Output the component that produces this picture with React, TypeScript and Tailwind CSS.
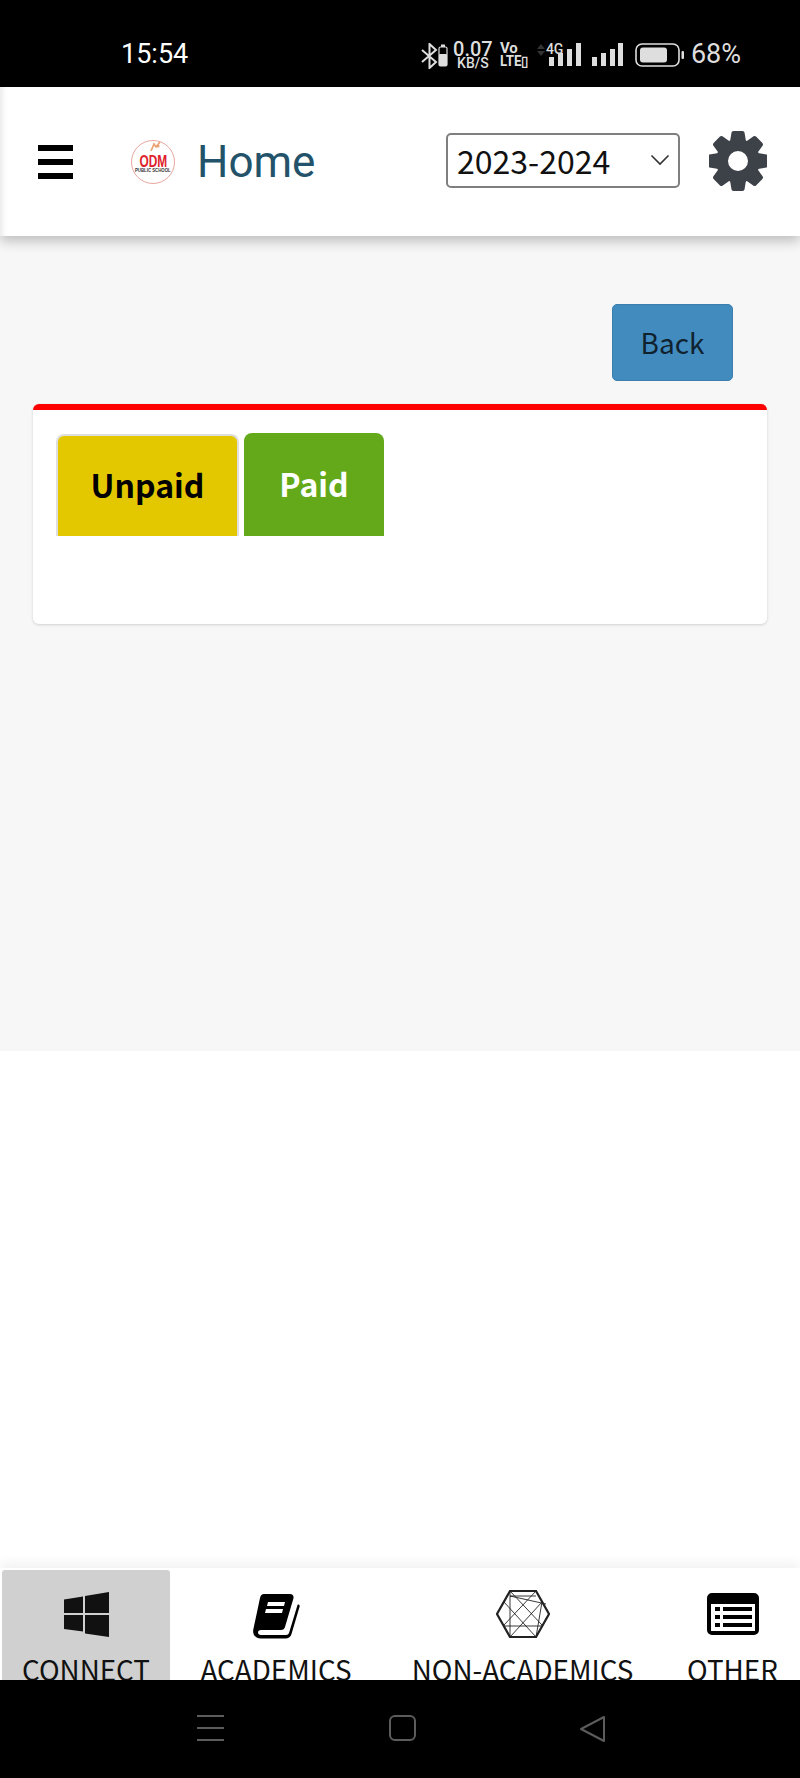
import React from 'react';

function StatusIcons() {
  return (
    <div className="flex items-center text-[#dedede] font-['Roboto',sans-serif]">
      {/* bluetooth + tiny battery */}
      <svg width="27" height="26" viewBox="0 0 27 26" fill="none" className="mt-[2px] shrink-0">
        <path d="M1 7l14 12-6.5 6V1L15 7 1 19" stroke="#dedede" strokeWidth="2" />
        <rect x="18" y="4" width="8" height="19" rx="1.5" stroke="#dedede" strokeWidth="1.2" />
        <rect x="18" y="11" width="8" height="12" rx="1" fill="#dedede" />
        <rect x="20" y="1.5" width="4" height="2.5" fill="#dedede" />
      </svg>
      <div className="ml-[6px] w-[38px] flex flex-col items-center leading-none">
        <span className="text-[20px] leading-[16px] font-medium">0.07</span>
        <span className="text-[14px] leading-[12px] font-medium">KB/S</span>
      </div>
      <div className="ml-[8px] w-[28px] flex flex-col leading-none font-bold">
        <span className="text-[15px] leading-[13px]">Vo</span>
        <span className="text-[14px] leading-[13px] scale-x-[0.95] origin-left whitespace-nowrap">LTE▯</span>
      </div>
      <svg width="8" height="12" viewBox="0 0 8 12" className="ml-[9px] mb-[10px]">
        <path d="M4 0l4 5H0z" fill="#333" />
        <path d="M4 12l4-5H0z" fill="#333" />
      </svg>
      <div className="relative ml-[1px] w-[36px] h-[24px]">
        <svg width="36" height="24" viewBox="0 0 36 24" className="absolute inset-0">
          <rect x="3" y="14" width="5" height="9" fill="#dedede" />
          <rect x="12" y="10" width="5" height="13" fill="#dedede" />
          <rect x="21" y="6" width="5" height="17" fill="#dedede" />
          <rect x="30" y="0" width="5" height="23" fill="#dedede" />
        </svg>
        <span className="absolute left-0 top-0 text-[14px] leading-[13px] font-medium">4G</span>
      </div>
      <svg width="33" height="24" viewBox="0 0 33 24" className="ml-[9px]">
        <rect x="1" y="14" width="5" height="9" fill="#dedede" />
        <rect x="10" y="10" width="5" height="13" fill="#dedede" />
        <rect x="19" y="6" width="5" height="17" fill="#dedede" />
        <rect x="27" y="0" width="5" height="23" fill="#dedede" />
      </svg>
      <svg width="50" height="24" viewBox="0 0 50 24" className="ml-[11px]">
        <rect x="1" y="1" width="43" height="22" rx="6" fill="none" stroke="#dedede" strokeWidth="1.6" />
        <rect x="5" y="4.5" width="27" height="15" rx="3" fill="#dedede" />
        <rect x="46.5" y="8" width="2.5" height="8" rx="1" fill="#dedede" />
      </svg>
      <span className="ml-[6px] text-[27px] leading-none">68%</span>
    </div>
  );
}

function SchoolLogo() {
  return (
    <div className="relative w-[44px] h-[44px] rounded-full border-[1.5px] border-[#e8a79f] bg-white flex flex-col items-center justify-center font-['Liberation_Sans',sans-serif]">
      <svg width="12" height="9" viewBox="0 0 12 9" className="absolute top-[1px] left-[18px]">
        <path d="M1 9l3-7 2 3 4-5" fill="none" stroke="#eba06f" strokeWidth="1.6" />
        <circle cx="8" cy="4" r="1.6" fill="#eba06f" />
      </svg>
      <span className="mt-[5px] text-[14px] leading-[12px] font-bold text-[#e0202a] scale-x-[0.85] scale-y-[1.15]">ODM</span>
      <span className="text-[6px] leading-[7px] font-bold text-[#333] whitespace-nowrap scale-x-[0.72]">PUBLIC SCHOOL</span>
    </div>
  );
}

const gearTeeth = [0, 45, 90, 135, 180, 225, 270, 315];

function Gear() {
  return (
    <svg width="58" height="60" viewBox="0 0 58 60">
      <g fill="#3d4148">
        {gearTeeth.map((deg) => (
          <path key={deg} d="M22.500 1.500a2 2 0 0 1 2-1.500h9a2 2 0 0 1 2 1.500l2 12h-17z" transform={`rotate(${deg} 29 30)`} />
        ))}
        <path fillRule="evenodd" d="M29 8a22 22 0 1 0 0 44 22 22 0 0 0 0-44zM29 20a10 10 0 1 1 0 20 10 10 0 0 1 0-20z" />
      </g>
    </svg>
  );
}

function WindowsIcon() {
  return (
    <svg width="45" height="45" viewBox="0 0 45 45" fill="#111" className="shrink-0">
      <path d="M0 7.500L19 4.500V21H0zM21 4L45 0V21H21zM0 23H19V39.500L0 37zM21 23H45V45L21 41.500z" />
    </svg>
  );
}

function BookIcon() {
  return (
    <svg width="48" height="46" viewBox="0 0 48 46" className="shrink-0">
      <path d="M12 1h26c3 0 4 2 3.400 4.500L33 34c-.6 2-1.800 3-4 3H9c-4 0-4 5 0 5h25c1.500 0 2.600-.8 3-2l8.500-28c.4-1 2.500-.2 2.200 1.200L39.500 41c-.8 2.800-3 4.500-6 4.500H9C3 45.500 0 41 1.500 35.500L8 5c.5-2.500 2-4 4-4z" fill="#000" />
      <path d="M16 9h17l-1 4H15zM14 16h17l-1 4H13z" fill="#fff" />
    </svg>
  );
}

function HexIcon() {
  return (
    <svg width="54" height="48" viewBox="0 0 54 48" fill="none" stroke="#222" className="shrink-0">
      <path d="M14 1h26l13 23-13 23H14L1 24z" strokeWidth="2.200" />
      <g strokeWidth="0.9">
        <path d="M14 1l32 34M40 1L8 35M14 47l32-35M40 47L8 12M14 6h26M8 36h38M14 1v46M14 6l36 8M40 47l6-35" />
      </g>
    </svg>
  );
}

function ListIcon() {
  return (
    <svg width="52" height="42" viewBox="0 0 52 42" className="shrink-0">
      <path fillRule="evenodd" d="M5 0h42a5 5 0 0 1 5 5v32a5 5 0 0 1-5 5H5a5 5 0 0 1-5-5V5a5 5 0 0 1 5-5zM4 11v27h44V11z" fill="#000" />
      <rect x="8" y="14" width="5" height="4" fill="#000" />
      <rect x="8" y="22" width="5" height="4" fill="#000" />
      <rect x="8" y="30" width="5" height="4" fill="#000" />
      <rect x="16" y="14" width="29" height="4" fill="#000" />
      <rect x="16" y="22" width="29" height="4" fill="#000" />
      <rect x="16" y="30" width="29" height="4" fill="#000" />
    </svg>
  );
}

export default function App() {
  return (
    <div className="w-[800px] h-[1778px] flex flex-col overflow-hidden bg-white font-['Noto_Sans_CJK_SC','Noto_Sans',sans-serif]">
      {/* Phone status bar */}
      <div className="h-[87px] shrink-0 bg-black flex items-center pl-[121px] pr-[59px] pt-[22px] justify-between">
        <span className="text-[27px] leading-none text-white font-['Roboto',sans-serif]">15:54</span>
        <StatusIcons />
      </div>

      {/* Header */}
      <header className="relative z-10 h-[149px] shrink-0 bg-white flex items-center pl-[38px] pr-[33px] shadow-[inset_7px_0_6px_-5px_rgba(0,0,0,0.1),0_5px_12px_rgba(0,0,0,0.24)]">
        <div className="w-[35px] flex flex-col gap-[8px]">
          <div className="h-[6px] bg-black" />
          <div className="h-[6px] bg-black" />
          <div className="h-[6px] bg-black" />
        </div>
        <div className="ml-[58px]">
          <SchoolLogo />
        </div>
        <span className="ml-[22px] text-[44px] leading-none text-[#23536a] font-['Roboto',sans-serif]">Home</span>
        <div className="ml-auto mb-[3px] w-[234px] h-[55px] border-2 border-[#7f7f7f] rounded-[5px] flex items-center justify-between pl-[9px] pr-[8px]">
          <span className="text-[32px] leading-none text-[#111]">2023-2024</span>
          <svg width="20" height="12" viewBox="0 0 20 12" fill="none">
            <path d="M1.500 1.500L10 10l8.500-8.500" stroke="#333" strokeWidth="1.600" />
          </svg>
        </div>
        <div className="ml-[29px] mb-[1px]">
          <Gear />
        </div>
      </header>

      {/* Page content */}
      <main className="h-[815px] shrink-0 bg-[#f7f7f7] px-[33px] pt-[68px]">
        <div className="flex justify-end pr-[34px]">
          <button className="w-[121px] h-[77px] bg-[#428bbf] border border-[#3a7fae] rounded-[5px] text-[28px] leading-none text-[#10222e] pb-[2px]">Back</button>
        </div>
        <div className="mt-[23px] h-[220px] bg-white border-t-[6px] border-[#ff0000] rounded-[6px] shadow-[0_1px_3px_rgba(0,0,0,0.16)] pt-[23px] pl-[23px]">
          <div className="flex items-end gap-[5px]">
            <div className="w-[183px] h-[102px] bg-[#e3c800] border-[2px] border-b-0 border-[#dedede] rounded-t-[8px] flex items-center justify-center pb-[4px]">
              <span className="text-[32px] leading-none font-bold text-black">Unpaid</span>
            </div>
            <div className="w-[140px] h-[103px] bg-[#63a91a] rounded-t-[8px] flex items-center justify-center pb-[4px]">
              <span className="text-[32px] leading-none font-bold text-white">Paid</span>
            </div>
          </div>
        </div>
      </main>

      <div className="flex-1 bg-white" />

      {/* Bottom tabs, cut off by the phone nav bar */}
      <nav className="relative h-[112px] shrink-0 bg-white flex overflow-hidden shadow-[0_-6px_10px_rgba(0,0,0,0.05)] text-[27.800px] text-[#111]">
        <div className="ml-[2px] w-[168px] shrink-0 mt-[2px] bg-[#d0d0d0] rounded-t-[3px] flex flex-col items-center">
          <div className="mt-[22px] h-[45px] shrink-0">
            <WindowsIcon />
          </div>
          <span className="mt-[14px] leading-[37px] shrink-0">CONNECT</span>
        </div>
        <div className="w-[212px] shrink-0 pt-[25px] flex flex-col items-center">
          <BookIcon />
          <span className="mt-[12px] leading-[37px] shrink-0">ACADEMICS</span>
        </div>
        <div className="w-[281px] shrink-0 pt-[22px] flex flex-col items-center">
          <HexIcon />
          <span className="mt-[13px] leading-[37px] shrink-0">NON-ACADEMICS</span>
        </div>
        <div className="w-[139px] shrink-0 pt-[25px] flex flex-col items-center">
          <ListIcon />
          <span className="mt-[16px] leading-[37px] shrink-0">OTHER</span>
        </div>
      </nav>

      {/* Phone nav bar */}
      <div className="h-[98px] shrink-0 bg-black flex items-start pt-[35px] pl-[197px]">
        <div className="w-[27px] flex flex-col gap-[10px]">
          <div className="h-[2px] bg-[#5c5c5c]" />
          <div className="h-[2px] bg-[#5c5c5c]" />
          <div className="h-[2px] bg-[#5c5c5c]" />
        </div>
        <div className="ml-[165px] w-[27px] h-[26px] border-2 border-[#5c5c5c] rounded-[6px]" />
        <svg width="28" height="28" viewBox="0 0 28 28" fill="none" className="ml-[165px] -translate-x-[2px]">
          <path d="M25 2v24L2 14z" stroke="#5c5c5c" strokeWidth="2" strokeLinejoin="round" />
        </svg>
      </div>
    </div>
  );
}
